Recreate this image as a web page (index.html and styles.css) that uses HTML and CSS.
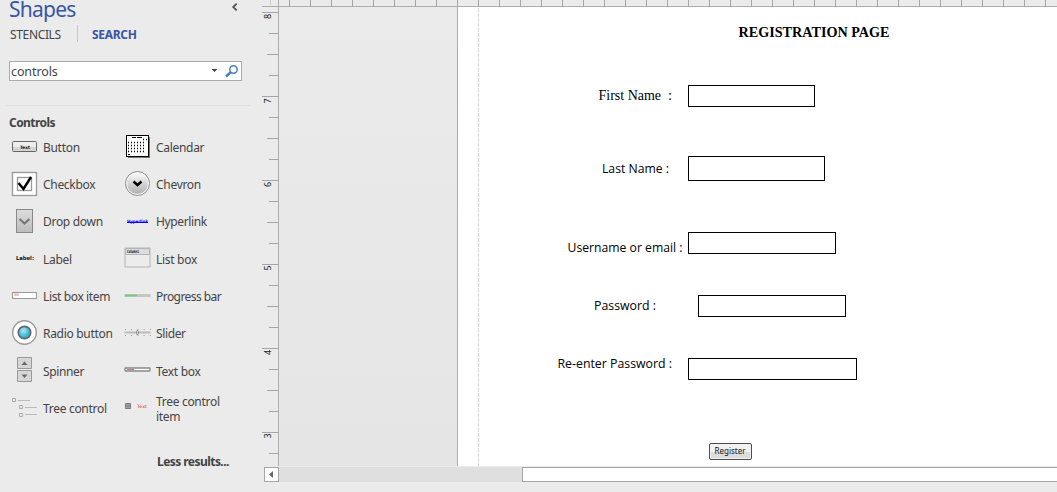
FILE: index.html
```html
<!DOCTYPE html>
<html lang="en">
<head>
<meta charset="utf-8">
<title>Shapes</title>
<link rel="stylesheet" href="styles.css">
</head>
<body>
<div class="app">
  <aside class="sidebar">
    <header class="head">
      <h1 class="title">Shapes</h1>
      <svg class="collapse" width="8" height="8" viewBox="0 0 8 8"><path d="M5.7 .6 2.2 4l3.5 3.4" fill="none" stroke="#555" stroke-width="1.8"/></svg>
    </header>
    <nav class="tabs"><span class="tab">STENCILS</span><span class="tab active">SEARCH</span></nav>
    <div class="search">
      <span class="query">controls</span>
      <svg width="28" height="18" viewBox="0 0 28 18"><path d="M0.500 7h6l-3 3z" fill="#444"/><path d="m15 14.500 5-4.500" stroke="#4a7fb8" stroke-width="2.400"/><circle cx="22.500" cy="7.500" r="3.700" fill="#fff" stroke="#4a7fb8" stroke-width="1.500"/></svg>
    </div>
    <h2 class="group">Controls</h2>
    <div class="grid">
      <div class="item"><svg class="icon" viewBox="0 0 37 37"><rect x="6.500" y="12.500" width="24" height="10" rx="1" fill="#eee" stroke="#666"/><path d="M7 18h23v4H7z" fill="#d4d4d4"/><text class="tiny" x="14" y="19.500" textLength="10" lengthAdjust="spacingAndGlyphs">Text</text></svg><span class="name">Button</span></div>
      <div class="item"><svg class="icon" viewBox="0 0 37 37"><rect x="9" y="8" width="22" height="21" fill="#777"/><rect x="7.500" y="6.500" width="22" height="21" fill="#fff" stroke="#000"/><path d="M13 8.500h4M18 8.500h5" stroke="#000"/><path d="M24 10.500h4M9 13.500h18M9 16.500h18M9 19.500h18M9 22.500h18" stroke="#000" stroke-dasharray="1 2" stroke-width="1.500"/><path d="M9 25.500h2" stroke="#000"/></svg><span class="name">Calendar</span></div>
      <div class="item"><svg class="icon" viewBox="0 0 37 37"><rect x="6.500" y="5.500" width="24" height="23" fill="#fff" stroke="#999" stroke-width="1.300"/><rect x="11.500" y="10.500" width="14" height="13" fill="#fff" stroke="#999" stroke-width="1.300"/><path d="m12.500 16 5 6 7.500-12" fill="none" stroke="#000" stroke-width="2.400"/></svg><span class="name">Checkbox</span></div>
      <div class="item"><svg class="icon" viewBox="0 0 37 37"><defs><linearGradient id="round" x2="0" y2="1"><stop stop-color="#fafafa"/><stop offset="1" stop-color="#b0b0b0"/></linearGradient></defs><circle cx="18.500" cy="16.500" r="12" fill="#fff" stroke="#888"/><circle cx="18.500" cy="16.500" r="10.500" fill="url(#round)"/><path d="m14.500 14.500 4 3.500 4-3.500" fill="none" stroke="#000" stroke-width="2.500"/></svg><span class="name">Chevron</span></div>
      <div class="item"><svg class="icon" viewBox="0 0 37 37"><defs><linearGradient id="drop" x2="0" y2="1"><stop stop-color="#ddd"/><stop offset="1" stop-color="#bbb"/></linearGradient></defs><rect x="10.500" y="5.500" width="16" height="23" fill="url(#drop)" stroke="#888"/><path d="m13.500 15 5 4.500 5-4.500" fill="none" stroke="#777" stroke-width="2.200"/></svg><span class="name">Drop down</span></div>
      <div class="item"><svg class="icon" viewBox="0 0 37 37"><text class="tiny link" x="8" y="18.500" textLength="21" lengthAdjust="spacingAndGlyphs">Hyperlink</text><path d="M8 18.500h21" stroke="#00f"/></svg><span class="name tight">Hyperlink</span></div>
      <div class="item"><svg class="icon" viewBox="0 0 37 37"><text class="tiny label" x="10" y="18.500" textLength="18" lengthAdjust="spacingAndGlyphs">Label:</text></svg><span class="name">Label</span></div>
      <div class="item"><svg class="icon" viewBox="0 0 37 37"><rect x="6" y="7" width="25" height="19" fill="#ececec" stroke="#b4b4b4"/><path d="M6.500 7.500h24v6h-24z" fill="#ddd" stroke="#b4b4b4"/><text class="tiny" x="8" y="12" textLength="12" lengthAdjust="spacingAndGlyphs">Column1</text></svg><span class="name">List box</span></div>
      <div class="item"><svg class="icon" viewBox="0 0 37 37"><rect x="6.500" y="13.500" width="24" height="6" fill="#fff" stroke="#999"/><text class="tiny red" x="8" y="16.500" textLength="5" lengthAdjust="spacingAndGlyphs">Text</text></svg><span class="name tight">List box item</span></div>
      <div class="item"><svg class="icon" viewBox="0 0 37 37"><path d="M5.500 16.500h26" stroke="#c4c4c4" stroke-width="3"/><path d="M6 16.500h12" stroke="#70d070" stroke-width="1.500"/></svg><span class="name tighter">Progress bar</span></div>
      <div class="item"><svg class="icon" viewBox="0 0 37 37"><defs><radialGradient id="radio" cx=".4" cy=".35"><stop stop-color="#a8eaf5"/><stop offset="1" stop-color="#35b5d6"/></radialGradient></defs><circle cx="18.500" cy="16.500" r="11.800" fill="#fff" stroke="#999" stroke-width="1.400"/><circle cx="18.500" cy="16.500" r="6.200" fill="url(#radio)" stroke="#666" stroke-width="1.700"/></svg><span class="name">Radio button</span></div>
      <div class="item"><svg class="icon" viewBox="0 0 37 37"><path d="M5.500 16.500h26" stroke="#bbb" stroke-width="2"/><path d="M6 13.500h26M6 19.500h26" stroke="#999" stroke-dasharray="1 5.200"/><path d="M18.500 14l1 1.500v2l-1 1.500-1-1.500v-2z" fill="#ddd" stroke="#888"/></svg><span class="name tight">Slider</span></div>
      <div class="item"><svg class="icon" viewBox="0 0 37 37"><path d="M11.500 4.500h14v11h-14zM11.500 17.500h14v11h-14z" fill="#d6d6d6" stroke="#999"/><path d="m15.500 12 3-3.500 3 3.500zM15.500 21.500h6l-3 3.500z" fill="#666"/></svg><span class="name tight">Spinner</span></div>
      <div class="item"><svg class="icon" viewBox="0 0 37 37"><rect x="6" y="15" width="25" height="3" rx=".5" fill="#fff" stroke="#888" stroke-width="1.300"/><path d="M8 16.500h7" stroke="#c77"/></svg><span class="name">Text box</span></div>
      <div class="item"><svg class="icon" viewBox="0 0 37 37"><path d="M6.500 7.500h3v3h-3zM13.500 14.500h3v3h-3zM13.500 22.500h3v3h-3z" fill="#eee" stroke="#aaa"/><path d="M12 9.500h12M19 16.500h12M19 23.500h12" stroke="#bbb"/></svg><span class="name">Tree control</span></div>
      <div class="item"><svg class="icon" viewBox="0 0 37 37"><path d="M6.500 12.500h5v5h-5zM9 12.500v5M6.500 15h5" fill="#bbb" stroke="#777"/><text class="tiny red" x="18" y="17" textLength="10" lengthAdjust="spacingAndGlyphs">Text</text></svg><span class="name">Tree control<br>item</span></div>
    </div>
    <div class="less">Less results...</div>
  </aside>
  <main class="work">
    <svg class="drawing" width="795" height="466" viewBox="262 0 795 466">
      <defs>
        <pattern id="hticks" x="289" y="0" width="21" height="6" patternUnits="userSpaceOnUse"><path d="M0 0h1v6H0z" fill="#a5a5a5"/></pattern>
        <pattern id="vticks" x="262" y="12" width="16" height="84" patternUnits="userSpaceOnUse"><path d="M0 0h16v1H0zM7 21h9v1H7zM5 42h11v1H5zM7 63h9v1H7z" fill="#a5a5a5"/></pattern>
        <linearGradient id="desk" x2="0" y2="1"><stop stop-color="#ebebeb"/><stop offset="1" stop-color="#e5e5e5"/></linearGradient>
      </defs>
      <rect x="279" y="7" width="178" height="459" fill="url(#desk)"/>
      <rect x="458" y="7" width="599" height="459" fill="#fff"/>
      <rect x="289" y="0" width="768" height="6" fill="url(#hticks)"/>
      <rect x="262" y="12" width="16" height="454" fill="url(#vticks)"/>
      <path d="M270.500 0v5" stroke="#ccc"/>
      <path d="M262 6.500h795M278.500 0v466" stroke="#adadad"/>
      <path d="M457.500 7v459" stroke="#a9abb2"/>
      <path d="M478.500 8v458" stroke="#d9d9d9" stroke-dasharray="4 1"/>
      <g class="nums">
        <text transform="translate(271 19) rotate(-90)">8</text>
        <text transform="translate(271 103.500) rotate(-90)">7</text>
        <text transform="translate(271 187) rotate(-90)">6</text>
        <text transform="translate(271 270.500) rotate(-90)">5</text>
        <text transform="translate(271 355) rotate(-90)">4</text>
        <text transform="translate(271 438.500) rotate(-90)">3</text>
      </g>
      <text class="heading" x="738.500" y="37" textLength="151" lengthAdjust="spacingAndGlyphs">REGISTRATION PAGE</text>
      <g class="serif">
        <text x="598.500" y="100" textLength="62.500" lengthAdjust="spacingAndGlyphs">First Name</text>
        <text x="668" y="100">:</text>
      </g>
      <g class="field">
        <text x="602" y="173" textLength="67" lengthAdjust="spacingAndGlyphs">Last Name :</text>
        <text x="567.500" y="252" textLength="115" lengthAdjust="spacingAndGlyphs">Username or email :</text>
        <text x="594" y="310" textLength="62" lengthAdjust="spacingAndGlyphs">Password :</text>
        <text x="557.500" y="368" textLength="114.500" lengthAdjust="spacingAndGlyphs">Re-enter Password :</text>
      </g>
      <g fill="#fff" stroke="#000">
        <rect x="688.500" y="85.500" width="126" height="21"/>
        <rect x="688.500" y="156.500" width="136" height="24"/>
        <rect x="688.500" y="232.500" width="147" height="21"/>
        <rect x="698.500" y="295.500" width="147" height="21"/>
        <rect x="688.500" y="358.500" width="168" height="21"/>
      </g>
      <rect x="709.500" y="443.500" width="42" height="16" rx="1.500" fill="#f2f2f2" stroke="#4d4d4d"/>
      <path d="M711 452h39v6h-39z" fill="#dcdcdc"/>
      <text class="register" x="714.500" y="454" textLength="31" lengthAdjust="spacingAndGlyphs">Register</text>
    </svg>
    <div class="scroll">
      <span class="arrow"><svg width="13" height="13" viewBox="0 0 13 13"><path d="M8 3v7L4 6.500z" fill="#666"/></svg></span>
      <span class="track"></span>
      <span class="thumb"></span>
    </div>
  </main>
</div>
</body>
</html>
```
FILE: styles.css
```css
* { box-sizing: border-box; }
body { margin: 0; background: #ebebeb; color: #444; font-family: "Noto Sans", sans-serif; }
.app { display: flex; width: 1057px; height: 492px; overflow: hidden; }
.sidebar { width: 262px; font-size: 12px; }
.head { display: flex; justify-content: space-between; height: 25px; padding: 0 23px 0 9px; }
.title { margin: 0; font-size: 21px; line-height: 19px; font-weight: 400; color: #3955a3; letter-spacing: -.75px; }
.collapse { margin-top: 3px; }
.tabs { display: flex; height: 20px; line-height: 19px; padding-left: 10px; }
.tab { width: 68px; height: 17px; letter-spacing: -.35px; border-right: 1px solid #c6c6c6; }
.tab.active { width: 80px; padding-left: 14px; border-right: 0; color: #3955a3; font-weight: 700; letter-spacing: -.3px; }
.search { display: flex; justify-content: space-between; width: 233px; height: 20px; margin: 16px 0 0 9px; padding: 0 2px 0 1px; border: 1px solid #ababab; background: #fff; line-height: 19px; }
.query { font-size: 12.500px; letter-spacing: -.1px; }
.group { margin: 24px 11px 0 6px; padding: 8px 3px 0; height: 24px; border-top: 1px solid #dfdfdf; font-size: 12px; line-height: 18px; letter-spacing: -.55px; }
.grid { display: grid; grid-template-columns: 113px 125px; grid-auto-rows: 37.350px; padding-left: 6px; }
.item { display: flex; align-items: center; }
.icon { width: 37px; height: 37px; flex: none; }
.name { line-height: 15px; padding-bottom: 1px; white-space: nowrap; letter-spacing: -.3px; }
.tight { letter-spacing: -.37px; }
.tighter { letter-spacing: -.55px; }
.less { margin: 26px 0 0 157px; line-height: 16px; font-weight: 700; letter-spacing: -.55px; }
.tiny { font: 700 4.500px "DejaVu Sans", sans-serif; fill: #111; }
.link { fill: #00f; }
.label { font-size: 5.500px; }
.red { fill: #c33; font-weight: 400; }
.work { width: 795px; }
.drawing { display: block; }
.nums text { font: 9px "Noto Sans", sans-serif; fill: #222; }
.heading { font: 700 14.500px "Liberation Serif", serif; fill: #000; }
.serif text { font: 14.500px "Liberation Serif", serif; fill: #000; }
.field text { font: 13px "Open Sans", sans-serif; fill: #000; }
.register { font: 8px "Noto Sans", sans-serif; fill: #111; }
.scroll { display: flex; height: 16px; padding: 1px 0 0 2px; }
.arrow { width: 15px; height: 15px; border: 1px solid #a6a6a6; background: #fff; }
.arrow svg { display: block; }
.track { width: 243px; background: #dfdfdf; }
.thumb { flex: 1; border: 1px solid #a6a6a6; border-right: 0; background: #fff; }
```
